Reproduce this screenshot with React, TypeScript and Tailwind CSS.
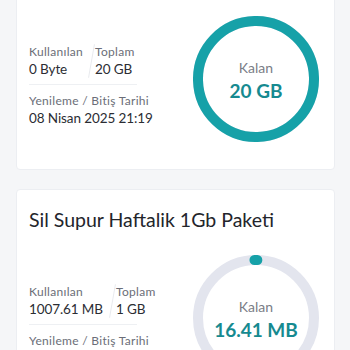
import React from "react";

function Ring({ pct, size = 126, stroke = 10 }: { pct: number; size?: number; stroke?: number }) {
  const r = (size - stroke) / 2;
  const c = 2 * Math.PI * r;
  const len = Math.max(c * pct, 0.01);
  return (
    <svg width={size} height={size} viewBox={`0 0 ${size} ${size}`} className="absolute inset-0">
      <circle cx={size / 2} cy={size / 2} r={r} fill="none" stroke="#e3e5ee" strokeWidth={stroke} />
      <circle
        cx={size / 2}
        cy={size / 2}
        r={r}
        fill="none"
        stroke="#16a1a8"
        strokeWidth={stroke}
        strokeLinecap="round"
        strokeDasharray={`${len} ${c}`}
        transform={`rotate(-91.5 ${size / 2} ${size / 2})`}
      />
    </svg>
  );
}

function Info({ used, total, date, col }: { used: string; total: string; date?: string; col: string }) {
  return (
    <div>
      <div className="flex items-stretch">
        <div className={`${col} shrink-0`}>
          <div className="text-[12px] tracking-[0.3px] leading-[16px] text-[#6b6e78] whitespace-nowrap">Kullanılan</div>
          <div className="text-[13.5px] tracking-[-0.1px] leading-[18px] text-[#2b2d33] whitespace-nowrap">{used}</div>
        </div>
        <div className="w-[8px] shrink-0 flex justify-center">
          <div className="w-[1px] h-full bg-[#e8eaee] rotate-[10deg]" />
        </div>
        <div className="shrink-0">
          <div className="text-[12px] tracking-[0.3px] leading-[16px] text-[#6b6e78]">Toplam</div>
          <div className="text-[13.5px] tracking-[-0.1px] leading-[18px] text-[#2b2d33] whitespace-nowrap">{total}</div>
        </div>
      </div>
      <div className="h-[1px] bg-[#eef0f3] mt-[6px] w-[108px]" />
      <div className="mt-[8px] text-[12px] tracking-[0.3px] leading-[16px] text-[#6b6e78] whitespace-nowrap">Yenileme / Bitiş Tarihi</div>
      {date && <div className="text-[13.5px] tracking-[-0.1px] leading-[18px] text-[#2b2d33] whitespace-nowrap">{date}</div>}
    </div>
  );
}

function Gauge({ pct, value }: { pct: number; value: string }) {
  return (
    <div className="relative w-[126px] h-[126px] shrink-0 flex flex-col items-center justify-center pt-[4px]">
      <Ring pct={pct} />
      <div className="text-[14px] leading-[18px] text-[#7a7d86]">Kalan</div>
      <div className="text-[19px] leading-[24px] font-bold text-[#168a90] mt-[2px]">{value}</div>
    </div>
  );
}

export default function App() {
  return (
    <div
      className="w-[350px] h-[350px] overflow-hidden bg-[#f5f6f8] px-[16px]"
      style={{ fontFamily: "Lato, 'Noto Sans', sans-serif" }}
    >
      <div className="-mt-[10px] h-[180px] bg-white border border-[#eceef2] rounded-[4px] flex items-start pl-[12px] pr-[15px] w-[319px]">
        <div className="pt-[53px]">
          <Info used="0 Byte" total="20 GB" date="08 Nisan 2025 21:19" col="w-[58px]" />
        </div>
        <div className="ml-auto mt-[25px]">
          <Gauge pct={1} value="20 GB" />
        </div>
      </div>
      <div className="mt-[19px] h-[200px] bg-white border border-[#eceef2] rounded-[4px] pl-[12px] pr-[15px] w-[319px]">
        <div className="pt-[16px] text-[19.5px] leading-[28px] text-[#23252b] whitespace-nowrap">Sil Supur Haftalik 1Gb Paketi</div>
        <div className="flex items-start mt-[21px]">
          <div className="pt-[29px]">
            <Info used="1007.61 MB" total="1 GB" col="w-[79px]" />
          </div>
          <div className="ml-auto">
            <Gauge pct={0.008} value="16.41 MB" />
          </div>
        </div>
      </div>
    </div>
  );
}
